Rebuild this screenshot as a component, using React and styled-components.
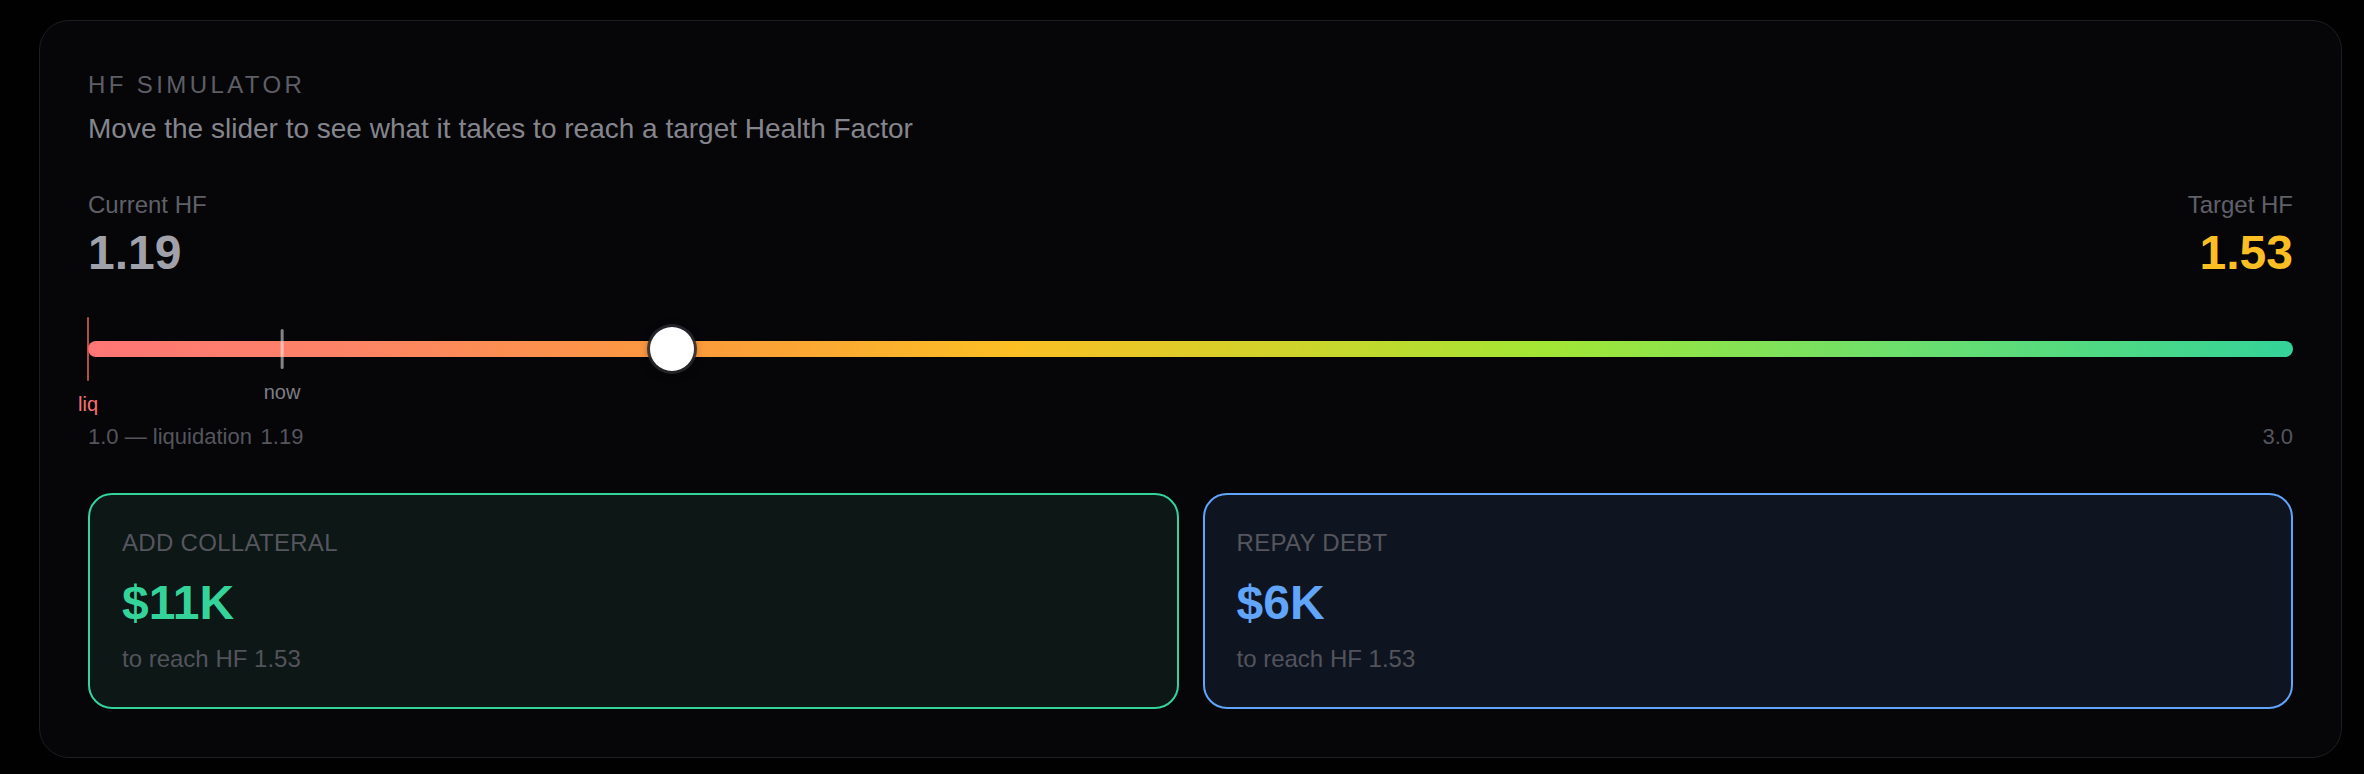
import React from "react";
import styled, { createGlobalStyle } from "styled-components";

const Global = createGlobalStyle`
  html, body { margin: 0; padding: 0; background: #010102; }
  body { font-family: "Liberation Sans", Arial, Helvetica, sans-serif; }
  * { box-sizing: border-box; }
`;

const Page = styled.div`
  padding: 20px 22px 20px 39px;
`;

const Panel = styled.section`
  background: #060608;
  border: 1px solid #1e1e22;
  border-radius: 30px;
  padding: 48px;
  display: flex;
  flex-direction: column;
`;

const Title = styled.div`
  font-size: 24px;
  line-height: 32px;
  letter-spacing: 3.4px;
  text-transform: uppercase;
  color: #5e5e66;
`;

const Subtitle = styled.div`
  margin-top: 8px;
  font-size: 28px;
  line-height: 40px;
  color: #85858d;
`;

const HeaderRow = styled.div`
  margin-top: 40px;
  display: flex;
  justify-content: space-between;
  align-items: flex-start;
`;

const Stat = styled.div`
  display: flex;
  flex-direction: column;
  align-items: ${(p) => (p.$right ? "flex-end" : "flex-start")};
`;

const StatLabel = styled.div`
  font-size: 24px;
  line-height: 32px;
  color: #606068;
`;

const StatValue = styled.div`
  font-size: 48px;
  line-height: 64px;
  font-weight: 700;
  color: ${(p) => p.$color};
`;

const TrackWrap = styled.div`
  position: relative;
  margin-top: 56px;
  height: 16px;
`;

const Track = styled.div`
  height: 16px;
  border-radius: 8px;
  background: linear-gradient(
    90deg,
    #ff7676 0%,
    #fd8466 12%,
    #fb9a3c 27%,
    #fbbf24 42%,
    #c9d62c 56%,
    #a3e635 66%,
    #6ddf6c 82%,
    #34d399 100%
  );
`;

const Marker = styled.div`
  position: absolute;
  top: ${(p) => p.$top}px;
  display: flex;
  flex-direction: column;
  align-items: center;
  gap: 9px;
  transform: translateX(-50%);
`;

const MarkerLine = styled.div`
  width: ${(p) => p.$w}px;
  height: ${(p) => p.$h}px;
  border-radius: 2px;
  background: ${(p) => p.$color};
`;

const MarkerLabel = styled.div`
  font-size: 20px;
  line-height: 28px;
  color: ${(p) => p.$color};
  white-space: nowrap;
`;

const Thumb = styled.div`
  position: absolute;
  top: 50%;
  width: 44px;
  height: 44px;
  border-radius: 50%;
  background: #ffffff;
  transform: translate(-50%, -50%);
  box-shadow: 0 0 0 3px rgba(40, 40, 46, 0.85), 0 2px 10px rgba(0, 0, 0, 0.5);
`;

const ScaleRow = styled.div`
  position: relative;
  margin-top: 66px;
  display: flex;
  justify-content: space-between;
  font-size: 22px;
  line-height: 28px;
  color: #55555d;
`;

const ScaleMark = styled.span`
  position: absolute;
  top: 0;
  transform: translateX(-50%);
`;

const Cards = styled.div`
  margin-top: 42px;
  display: grid;
  grid-template-columns: 1fr 1fr;
  gap: 24px;
`;

const Card = styled.div`
  border: 2px solid ${(p) => p.$accent};
  background: ${(p) => p.$bg};
  border-radius: 24px;
  padding: 32px;
  display: flex;
  flex-direction: column;
`;

const CardLabel = styled.div`
  font-size: 24px;
  line-height: 32px;
  letter-spacing: 0.3px;
  text-transform: uppercase;
  color: #56565e;
`;

const CardValue = styled.div`
  margin-top: 12px;
  font-size: 48px;
  line-height: 64px;
  font-weight: 700;
  color: ${(p) => p.$accent};
`;

const CardNote = styled.div`
  margin-top: 8px;
  font-size: 24px;
  line-height: 32px;
  color: #53535b;
`;

const MIN = 1.0;
const MAX = 3.0;
const current = 1.19;
const target = 1.53;
const pct = (v) => ((v - MIN) / (MAX - MIN)) * 100;

export default function App() {
  return (
    <Page>
      <Global />
      <Panel>
        <Title>HF Simulator</Title>
        <Subtitle>Move the slider to see what it takes to reach a target Health Factor</Subtitle>

        <HeaderRow>
          <Stat>
            <StatLabel>Current HF</StatLabel>
            <StatValue $color="#a1a1aa">{current.toFixed(2)}</StatValue>
          </Stat>
          <Stat $right>
            <StatLabel>Target HF</StatLabel>
            <StatValue $color="#fbbf24">{target.toFixed(2)}</StatValue>
          </Stat>
        </HeaderRow>

        <TrackWrap>
          <Track />
          <Marker $top={-24} style={{ left: "0%" }}>
            <MarkerLine $w={2} $h={64} $color="rgba(232, 104, 84, 0.75)" />
            <MarkerLabel $color="#f87171">liq</MarkerLabel>
          </Marker>
          <Marker $top={-12} style={{ left: "8.8%" }}>
            <MarkerLine $w={3} $h={40} $color="rgba(255, 255, 255, 0.5)" />
            <MarkerLabel $color="#7e7e86">now</MarkerLabel>
          </Marker>
          <Thumb style={{ left: `${pct(target)}%` }} />
        </TrackWrap>

        <ScaleRow>
          <span>1.0 — liquidation</span>
          <ScaleMark style={{ left: "8.8%" }}>{current.toFixed(2)}</ScaleMark>
          <span>3.0</span>
        </ScaleRow>

        <Cards>
          <Card $accent="#34d399" $bg="#0c1716">
            <CardLabel>Add collateral</CardLabel>
            <CardValue $accent="#34d399">$11K</CardValue>
            <CardNote>to reach HF {target.toFixed(2)}</CardNote>
          </Card>
          <Card $accent="#60a5fa" $bg="#0f1520">
            <CardLabel>Repay debt</CardLabel>
            <CardValue $accent="#60a5fa">$6K</CardValue>
            <CardNote>to reach HF {target.toFixed(2)}</CardNote>
          </Card>
        </Cards>
      </Panel>
    </Page>
  );
}
